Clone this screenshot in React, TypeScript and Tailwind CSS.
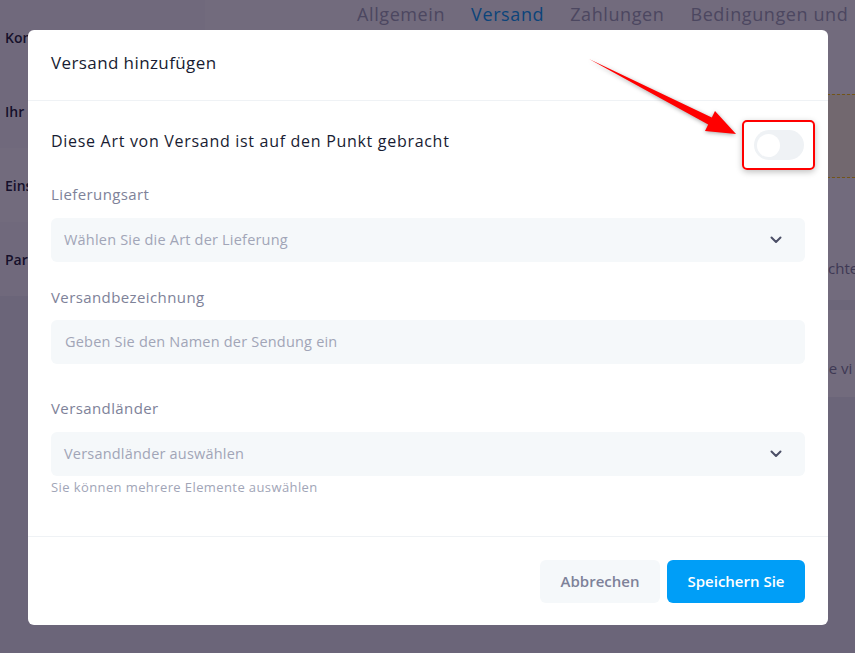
import React from "react";

function Chevron() {
  return (
    <svg width="12" height="8" viewBox="0 0 12 8" fill="none">
      <path d="M1.5 1.5 6 6l4.5-4.5" stroke="#4b4f66" strokeWidth="2" strokeLinecap="round" strokeLinejoin="round" />
    </svg>
  );
}

function SelectBox({ placeholder }: { placeholder: string }) {
  return (
    <div className="flex h-[44px] items-center justify-between rounded-md bg-[#f5f8fa] pl-[13px] pr-[23px]">
      <span className="text-[14.5px] font-medium tracking-[0.2px] text-[#a1a5b7]">{placeholder}</span>
      <Chevron />
    </div>
  );
}

function BackgroundPage() {
  const rows = ["Kontaktdaten", "Ihr Shopname", "Einstellungen", "Partnerprogramm"];
  return (
    <div className="flex h-full w-full bg-[#eef1f4]">
      {/* left label column, only its first letters show beside the dialog */}
      <div className="flex w-[205px] shrink-0 flex-col">
        {rows.map((r, i) => (
          <div
            key={r}
            className={"flex h-[74px] items-center pl-[5px] " + (i === 2 ? "bg-white" : "bg-[#fafbfc]")}
          >
            <span className="w-[23px] overflow-hidden whitespace-nowrap text-[14px] font-semibold text-[#181c32]">
              {r}
            </span>
          </div>
        ))}
      </div>

      {/* right side */}
      <div className="flex min-w-0 flex-1 flex-col">
        <div className="flex h-[28px] items-center gap-[26px] whitespace-nowrap bg-white pl-[152px] text-[18px] font-medium tracking-[0.6px] text-[#a1a5b7]">
          <span>Allgemein</span>
          <span className="text-[#009ef7]">Versand</span>
          <span>Zahlungen</span>
          <span>Bedingungen und</span>
        </div>
        <div className="h-[66px] bg-white" />
        <div className="h-[84px] border-y border-dashed border-[#ffc700] bg-[#fff8dd]" />
        <div className="flex h-[122px] items-end bg-white pb-[22px] pl-[623px] text-[15px] font-medium leading-[20px] text-[#7e8299] whitespace-nowrap">
          chte
        </div>
        <div className="h-[10px] bg-[#f1f3f6]" />
        <div className="h-[87px] bg-white pl-[620px] pt-[48px] text-[15px] font-medium leading-[20px] text-[#7e8299] whitespace-nowrap">
          ie vi
        </div>
      </div>
    </div>
  );
}

export default function App() {
  return (
    <div className="relative h-[653px] w-[855px] overflow-hidden font-['Open_Sans',sans-serif]">
      <BackgroundPage />

      {/* backdrop */}
      <div className="absolute inset-0 bg-[#140826]/60" />

      {/* modal */}
      <div className="absolute left-[28px] top-[30px] w-[800px] rounded-md bg-white">
        <div className="flex h-[71px] items-center border-b border-[#eff2f5] px-[23px]">
          <h2 className="-mt-[4px] text-[17px] font-medium tracking-[0.4px] text-[#181c32]">Versand hinzufügen</h2>
        </div>

        <div className="px-[23px] pb-[40px] pt-[19px]">
          <div className="flex h-[50px] items-center justify-between">
            <span className="-mt-[8px] text-[16px] tracking-[0.7px] text-[#181c32]">
              Diese Art von Versand ist auf den Punkt gebracht
            </span>
            <div className="-mr-[10px] flex h-[50px] w-[73px] items-center justify-center rounded-[5px] border-2 border-[#ff0000] shadow-[0_2px_6px_rgba(0,0,0,0.25)]">
              <div className="flex h-[30px] w-[50px] items-center rounded-full bg-[#eff2f5] px-[3px]">
                <div className="h-[23px] w-[23px] rounded-full bg-white" />
              </div>
            </div>
          </div>

          <div className="mt-[14px] h-[20px] text-[15px] font-medium leading-[20px] tracking-[0.4px] text-[#7e8299]">Lieferungsart</div>
          <div className="mt-[14px]">
            <SelectBox placeholder="Wählen Sie die Art der Lieferung" />
          </div>

          <div className="mt-[25px] h-[20px] text-[15px] font-medium leading-[20px] tracking-[0.4px] text-[#7e8299]">Versandbezeichnung</div>
          <div className="mt-[13px] flex h-[44px] items-center rounded-md bg-[#f5f8fa] px-[14px]">
            <span className="text-[14.5px] font-medium tracking-[0.2px] text-[#a1a5b7]">Geben Sie den Namen der Sendung ein</span>
          </div>

          <div className="mt-[34px] h-[20px] text-[15px] font-medium leading-[20px] tracking-[0.4px] text-[#7e8299]">Versandländer</div>
          <div className="mt-[14px]">
            <SelectBox placeholder="Versandländer auswählen" />
          </div>
          <div className="mt-[2px] h-[18px] text-[13px] leading-[18px] tracking-[0.4px] text-[#a1a5b7]">
            Sie können mehrere Elemente auswählen
          </div>
        </div>

        <div className="flex justify-end gap-[7px] border-t border-[#eff2f5] px-[23px] pb-[22px] pt-[23px]">
          <button className="h-[43px] w-[120px] rounded-md bg-[#f5f8fa] text-[15px] font-semibold text-[#7e8299]">
            Abbrechen
          </button>
          <button className="h-[43px] w-[138px] rounded-md bg-[#009ef7] text-[15px] font-semibold text-white">
            Speichern Sie
          </button>
        </div>
      </div>

      {/* annotation arrow */}
      <svg
        className="pointer-events-none absolute inset-0 drop-shadow-[0_1px_2px_rgba(0,0,0,0.35)]"
        width="855"
        height="653"
        viewBox="0 0 855 653"
      >
        <polygon points="589,59 711.8,117.4 715,111 736,134 705,131 708.2,124.6" fill="#ff0000" />
      </svg>
    </div>
  );
}
